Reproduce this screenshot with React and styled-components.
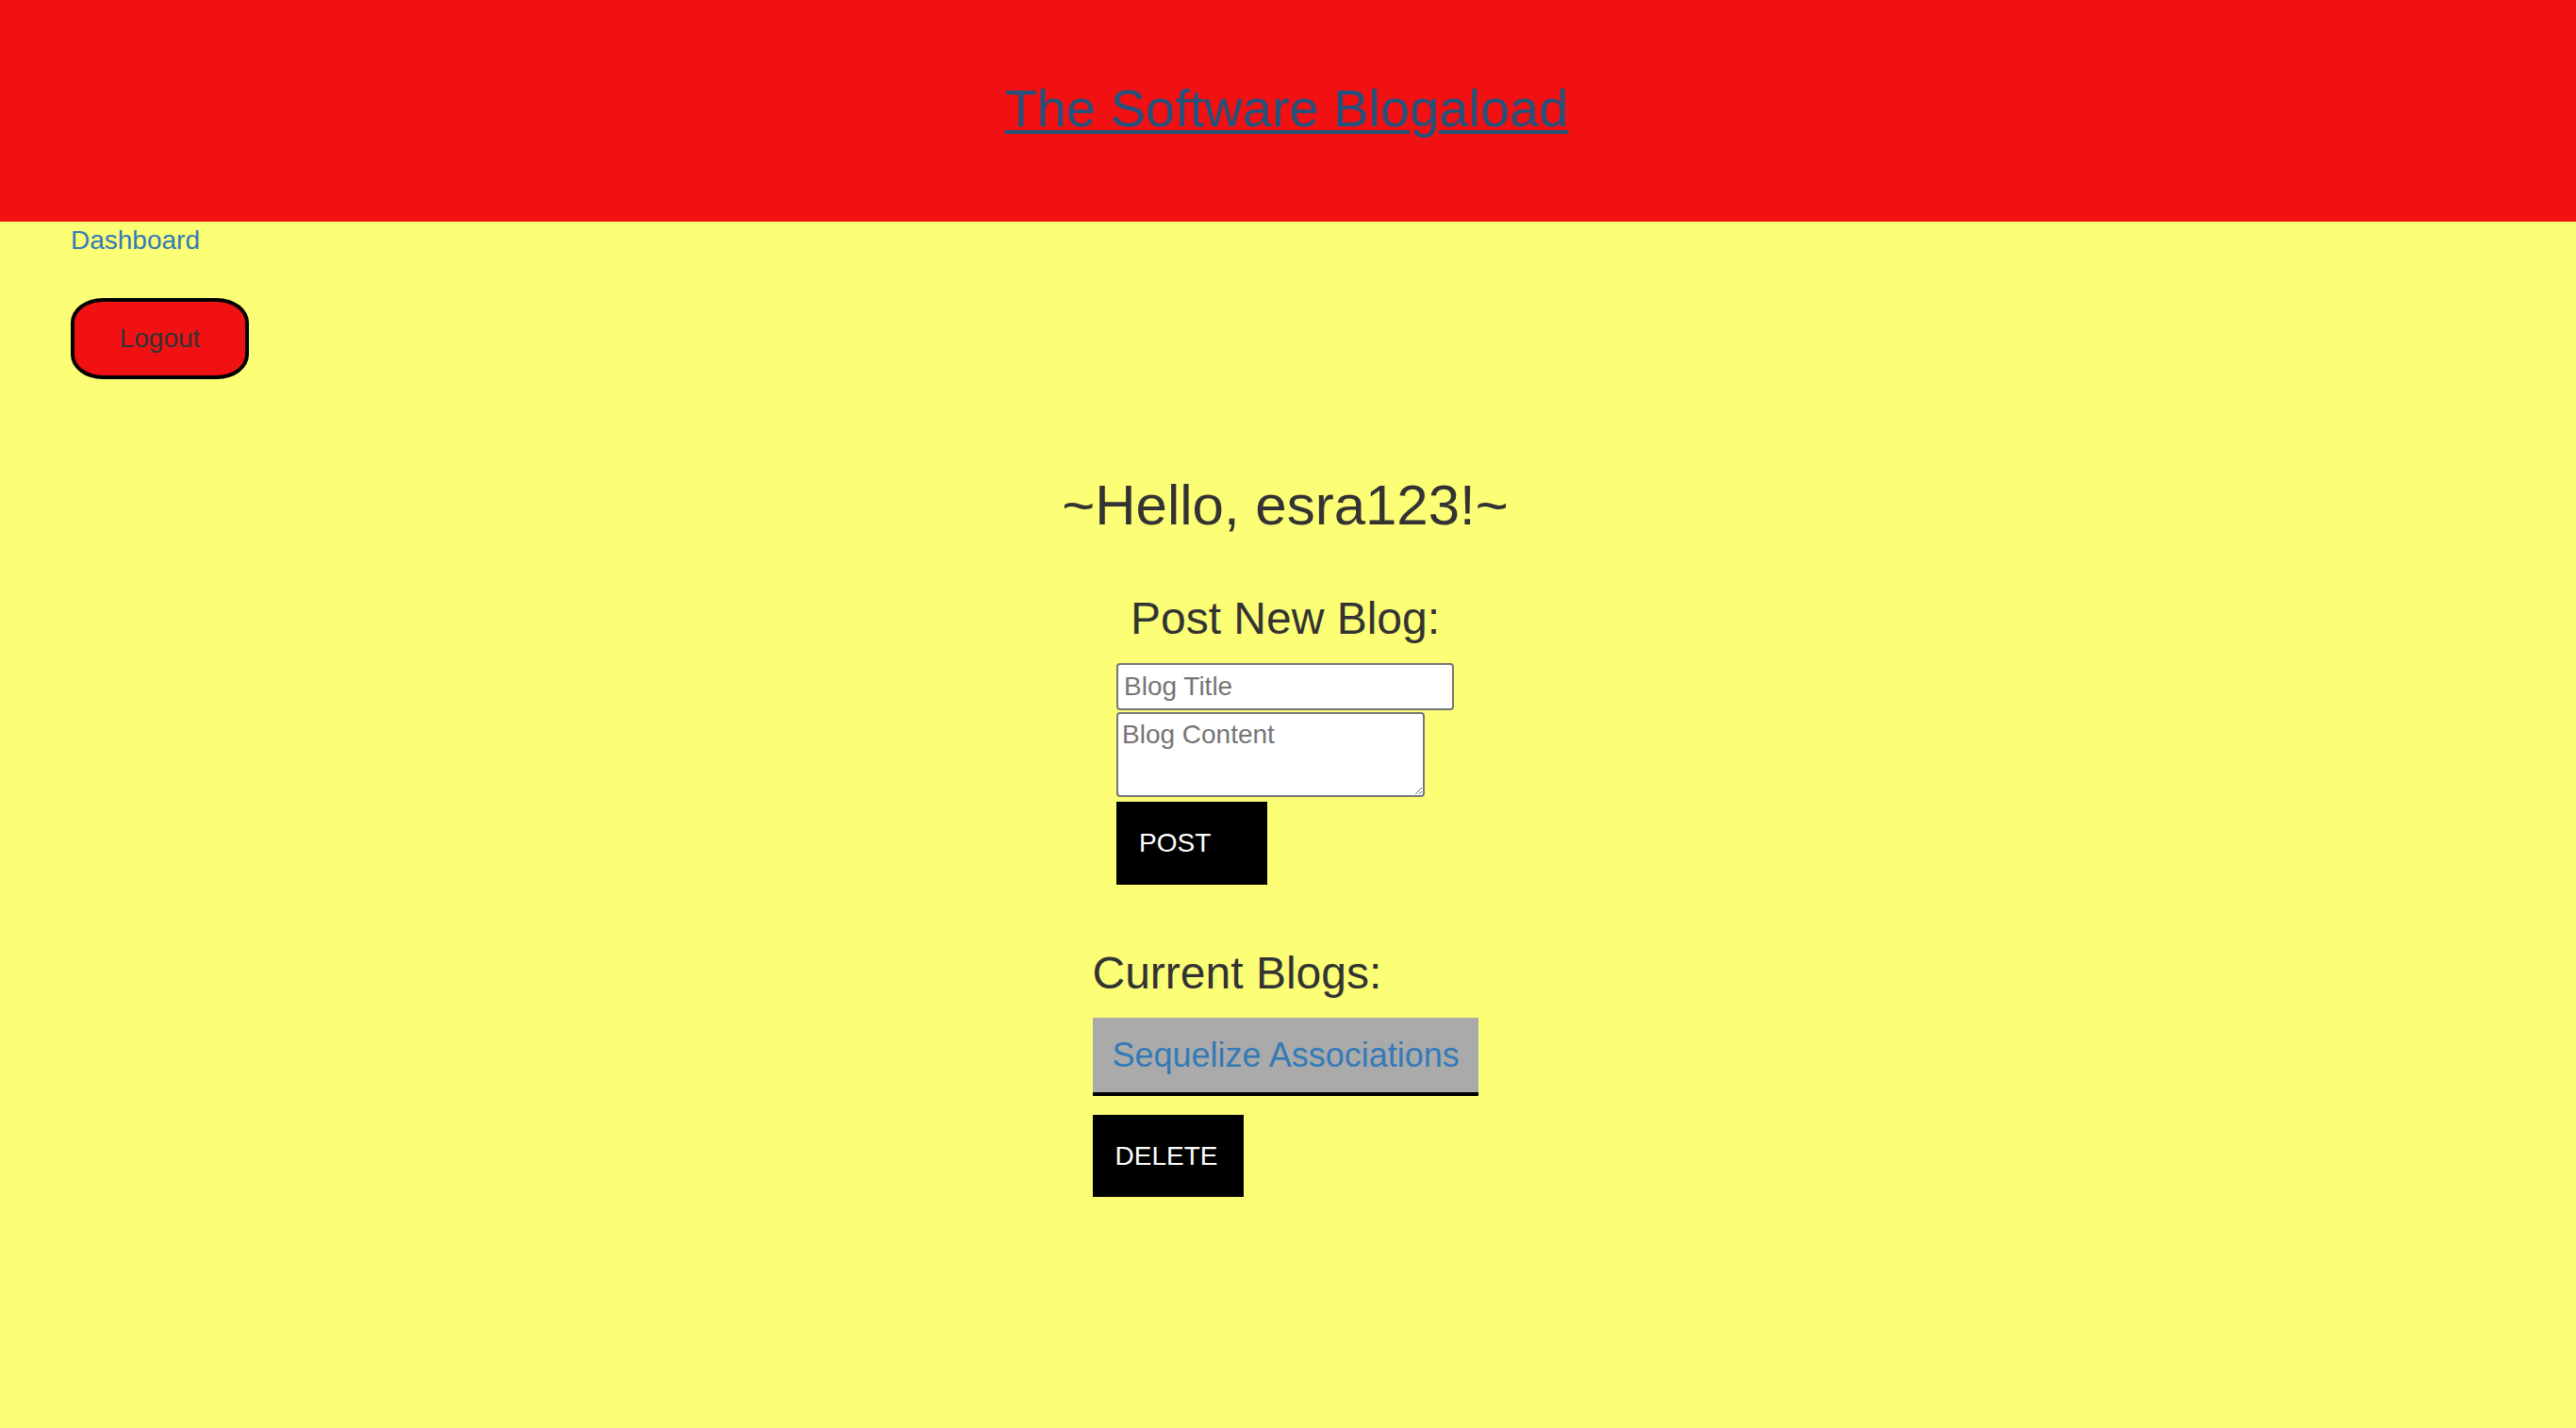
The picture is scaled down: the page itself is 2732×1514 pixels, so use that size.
import React from 'react';
import styled, { createGlobalStyle } from 'styled-components';

const GlobalStyle = createGlobalStyle`
  * {
    box-sizing: border-box;
  }
  html, body {
    margin: 0;
    padding: 0;
  }
  body {
    background-color: #fcff75;
    font-family: "Liberation Sans", Arial, Helvetica, sans-serif;
    font-size: 28px;
    line-height: 1.42857;
    color: #333333;
    min-height: 100vh;
  }
`;

const blogs = [{ id: 1, title: 'Sequelize Associations' }];

const App = () => {
  return (
    <>
      <GlobalStyle />
      <Page>
        <Header>
          <SiteTitle href="#">The Software Blogaload</SiteTitle>
        </Header>
        <Nav>
          <NavLink href="#">Dashboard</NavLink>
          <LogoutButton type="button">Logout</LogoutButton>
        </Nav>
        <Main>
          <Greeting>~Hello, esra123!~</Greeting>
          <Section>
            <SectionTitle>Post New Blog:</SectionTitle>
            <Form onSubmit={(e) => e.preventDefault()}>
              <TitleInput type="text" placeholder="Blog Title" />
              <ContentInput placeholder="Blog Content" />
              <BlackButton type="submit">POST</BlackButton>
            </Form>
          </Section>
          <BlogSection>
            <SectionTitle>Current Blogs:</SectionTitle>
            {blogs.map((blog) => (
              <BlogItem key={blog.id}>
                <BlogCard>
                  <BlogLink href="#">{blog.title}</BlogLink>
                </BlogCard>
                <BlackButton type="button">DELETE</BlackButton>
              </BlogItem>
            ))}
          </BlogSection>
        </Main>
      </Page>
    </>
  );
};

export default App;

const Page = styled.div`
  min-height: 100vh;
  background-color: #fcff75;
`;

const Header = styled.header`
  height: 235px;
  padding-bottom: 6px;
  padding-right: 3px;
  background-color: #f21112;
  display: flex;
  align-items: center;
  justify-content: center;
`;

const SiteTitle = styled.a`
  font-size: 56px;
  line-height: 1.1;
  color: #23527c;
  text-decoration: underline;
  text-decoration-thickness: 4px;
  text-underline-offset: 4px;
`;

const Nav = styled.nav`
  display: flex;
  flex-direction: column;
  align-items: flex-start;
  padding-left: 75px;
`;

const NavLink = styled.a`
  color: #337ab7;
  text-decoration: none;
  font-size: 28px;
  line-height: 40px;
`;

const LogoutButton = styled.button`
  margin-top: 41px;
  width: 189px;
  height: 86px;
  background-color: #f21112;
  border: 4px solid #000000;
  border-radius: 34px / 26px;
  font-family: inherit;
  font-size: 28px;
  color: #333333;
  cursor: pointer;
`;

const Main = styled.main`
  display: flex;
  flex-direction: column;
  align-items: center;
  padding-top: 101px;
  padding-right: 6px;
  padding-bottom: 80px;
`;

const Greeting = styled.h2`
  margin: 0;
  font-size: 60px;
  font-weight: 400;
  line-height: 66px;
`;

const Section = styled.section`
  margin-top: 60px;
  display: flex;
  flex-direction: column;
  align-items: center;
`;

const BlogSection = styled.section`
  margin-top: 67px;
  display: flex;
  flex-direction: column;
  align-items: flex-start;
`;

const SectionTitle = styled.h3`
  margin: 0 0 21px;
  font-size: 48px;
  font-weight: 400;
  line-height: 53px;
`;

const Form = styled.form`
  display: flex;
  flex-direction: column;
  align-items: flex-start;
  gap: 2px;
`;

const fieldStyles = `
  font-family: "Liberation Sans", Arial, Helvetica, sans-serif;
  font-size: 28px;
  color: #333333;
  background: #ffffff;
  border: 2px solid #767676;
  border-radius: 4px;
  outline: none;

  &::placeholder {
    color: #757575;
  }
`;

const TitleInput = styled.input`
  ${fieldStyles}
  width: 358px;
  height: 50px;
  padding: 2px 6px;
`;

const ContentInput = styled.textarea`
  ${fieldStyles}
  width: 327px;
  height: 90px;
  padding: 6px 4px 2px;
  line-height: 1.15;
  resize: both;
`;

const BlackButton = styled.button`
  margin-top: 3px;
  width: 160px;
  height: 88px;
  padding: 0 24px;
  text-align: left;
  background-color: #000000;
  color: #ffffff;
  border: none;
  border-radius: 0;
  font-family: inherit;
  font-size: 28px;
  cursor: pointer;
`;

const BlogItem = styled.div`
  display: flex;
  flex-direction: column;
  align-items: flex-start;
  gap: 20px;

  ${BlackButton} {
    margin-top: 0;
    height: 87px;
  }
`;

const BlogCard = styled.div`
  width: 409px;
  height: 83px;
  padding: 0 21px;
  display: flex;
  align-items: center;
  background-color: #aaaaaa;
  border-bottom: 4px solid #000000;
`;

const BlogLink = styled.a`
  color: #337ab7;
  text-decoration: none;
  font-size: 36px;
  line-height: 1.1;
  white-space: nowrap;
`;
